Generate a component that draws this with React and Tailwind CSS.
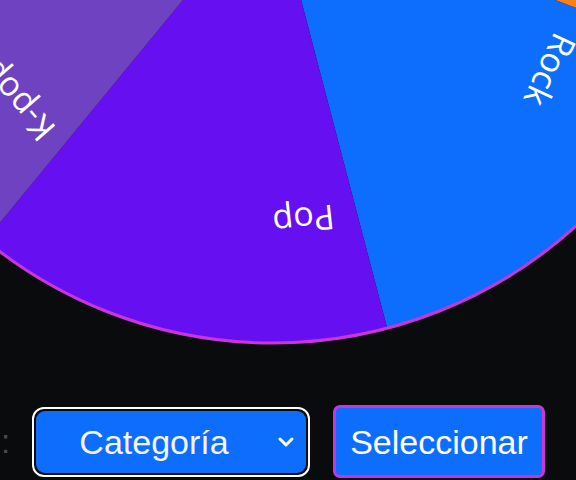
import React from "react";

const CX = 272.5;
const CY = -109;
const R = 452;

function pt(a, r) {
  const t = (a * Math.PI) / 180;
  return [CX + r * Math.cos(t), CY + r * Math.sin(t)];
}

function sector(a1, a2) {
  const [x1, y1] = pt(a1, R);
  const [x2, y2] = pt(a2, R);
  const large = a2 - a1 > 180 ? 1 : 0;
  return `M ${CX} ${CY} L ${x1} ${y1} A ${R} ${R} 0 ${large} 1 ${x2} ${y2} Z`;
}

const segments = [
  { a1: -32.9, a2: 21.1, color: "#fd7e14" },
  { a1: 21.1, a2: 75.3, color: "#0d6efd" },
  { a1: 75.3, a2: 129.4, color: "#6610f2" },
  { a1: 129.4, a2: 183.5, color: "#6f42c1" },
  { a1: 183.5, a2: 237.5, color: "#d63384" },
  { a1: 237.5, a2: 291.5, color: "#20c997" },
  { a1: 291.5, a2: 327.1, color: "#ffc107" },
];

const labels = [
  { text: "Rock", a: 32.8, rot: 115 },
  { text: "Pop", a: 84.6, rot: 174 },
  { text: "K-pop", a: 140.6, rot: 229 },
];

function Wheel() {
  return (
    <svg width="576" height="348" viewBox="0 0 576 348" className="block shrink-0">
      {segments.map((s, i) => (
        <path key={i} d={sector(s.a1, s.a2)} fill={s.color} />
      ))}
      {labels.map((l) => {
        const [x, y] = pt(l.a, 331);
        return (
          <text
            key={l.text}
            x={x}
            y={y}
            fill="#ffffff"
            fontSize="34"
            fontFamily="'Open Sans', 'Noto Sans', sans-serif"
            textAnchor="middle"
            dominantBaseline="central"
            transform={`rotate(${l.rot} ${x} ${y})`}
          >
            {l.text}
          </text>
        );
      })}
      <circle cx={CX} cy={CY} r={R} fill="none" stroke="#c935d9" strokeWidth="3" />
    </svg>
  );
}

export default function App() {
  return (
    <div
      className="w-[576px] h-[480px] overflow-hidden bg-[#0a0b0d] flex flex-col"
      style={{ fontFamily: "'Liberation Sans', Arial, sans-serif" }}
    >
      <Wheel />
      <div className="mt-[57px] flex items-center h-[73px]">
        <span className="ml-[1px] w-[31px] text-[33px] leading-none text-[#4a4a4a]">:</span>
        <div className="w-[278px] h-[70px] rounded-[12px] border-2 border-white bg-[#0a0b0d] p-[2px]">
          <div className="relative w-full h-full rounded-[9px] bg-[#0d6efd] flex items-center">
            <span className="flex-1 pr-[34px] text-center text-[34px] text-[#f4f4f4] leading-none">
              Categoría
            </span>
            <svg
              className="absolute right-[10px] top-1/2 -translate-y-1/2"
              width="20"
              height="14"
              viewBox="0 0 20 14"
            >
              <path
                d="M4 4 L10 10 L16 4"
                fill="none"
                stroke="#ffffff"
                strokeWidth="3"
                strokeLinecap="round"
                strokeLinejoin="round"
              />
            </svg>
          </div>
        </div>
        <div className="ml-[23px] w-[212px] h-[73px] rounded-[7px] border-[3px] border-[#c935d9] bg-[#0d6efd] flex items-center justify-center">
          <span className="text-[34px] text-white leading-none">Seleccionar</span>
        </div>
      </div>
    </div>
  );
}
